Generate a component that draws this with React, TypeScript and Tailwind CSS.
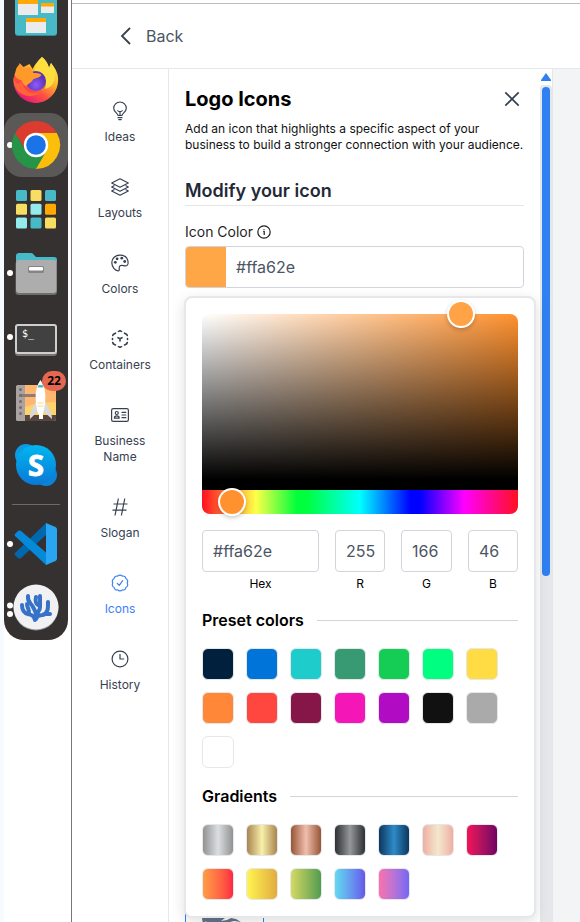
import React from "react";

type P = { children: React.ReactNode };

const Cell = ({ children }: P) => (
  <svg className="block size-16 shrink-0" viewBox="0 0 64 64">{children}</svg>
);

const Dot = ({ y = 32 }: { y?: number }) => <circle cx="6" cy={y} r="3" fill="#fff" />;

function Dock() {
  return (
    <aside className="flex w-[71px] shrink-0 border-l-4 border-[#f7fafe]">
      <div className="relative -mt-[15px] flex h-[655px] w-16 flex-col overflow-hidden rounded-b-[20px] bg-[#353130]">
        <Cell>
          <rect x="11" y="2" width="42" height="49" rx="3" fill="#348a99" />
          <rect x="11" y="2" width="42" height="48" rx="3" fill="#48b9c7" />
          <path d="M14 14h20v16H14zM37 18h13v10H37zM22 33h20v15H22z" fill="#ebebeb" />
          <path d="M14 14h20v5H14zM37 18h13v3.500H37zM22 33h20v4H22z" fill="#ffa902" />
        </Cell>
        <Cell>
          <defs>
            <linearGradient id="ff1" x1="0.85" y1="0.1" x2="0.25" y2="1">
              <stop offset="0" stopColor="#fff04f" /><stop offset="0.35" stopColor="#ffb52e" />
              <stop offset="0.65" stopColor="#ff5440" /><stop offset="1" stopColor="#e5127d" />
            </linearGradient>
            <radialGradient id="ff2" cx="0.5" cy="0.7"><stop offset="0" stopColor="#9059ff" /><stop offset="1" stopColor="#5b34b0" /></radialGradient>
          </defs>
          <path d="M38 8c4 3 6 7 7 11l2-5c5 6 8 12 7 19-1 12-11 21-22 21S9.500 45 9.500 32c0-5 2-9 5-12l1-6 4 4 6-3 3 5c3-5 5-8 9.500-12z" fill="url(#ff1)" />
          <path d="M38 8c4 3 6 7 7 11l2-5c4 6 5 12 3 18-2 5-5 7-9 8 3-8 0-15-9-18-4-1 1-9 6-14z" fill="#ffdf40" />
          <circle cx="32" cy="32" r="10" fill="url(#ff2)" />
          <path d="M10.500 26l2-7 3-4 3 5 7-2 4 6c3 0 6 0 8 2-2 3-6 3-8 4-2 4-5 4-7 7-2 0-4-3-5-6-3 0-5-2-7-5z" fill="#ff9a2a" />
          <path d="M9.800 28c2 8 5 8 8 4 1 9 9 15 19 11-7 6-17 5-23-1-3-4-5-9-4-14z" fill="#ff6438" />
        </Cell>
        <div className="h-16 w-16 rounded-[18px] bg-[#5b5957]">
          <Cell>
            <Dot />
            <path d="M32 32V20h20.800A24 24 0 0 1 32 56z" fill="#fbbe0b" />
            <path d="M32 32 42.400 38 32 56A24 24 0 0 1 11.200 20l10.400 18z" fill="#259447" />
            <path d="M11.200 20A24 24 0 0 1 52.800 20H32l-10 17z" fill="#dc3b2f" />
            <circle cx="32" cy="32" r="12.200" fill="#fff" /><circle cx="32" cy="32" r="9.800" fill="#1b73e8" />
          </Cell>
        </div>
        <Cell>
          {["#48b9c7", "#f7de62", "#48b9c7", "#f7de62", "#94ebeb", "#ffa902", "#94ebeb", "#48b9c7", "#f7de62"].map((c, i) => (
            <rect key={i} x={12 + (i % 3) * 14.500} y={13 + Math.floor(i / 3) * 13.800} width="11" height="11" rx="1.500" fill={c} />
          ))}
        </Cell>
        <Cell>
          <Dot />
          <path d="M12 15q0-3 3-3h12q2 0 3 2l2 2h18q3 0 3 3v4H12z" fill="#48b9c7" />
          <rect x="11.500" y="20" width="41.500" height="34" rx="3" fill="#706d6b" /><rect x="12" y="19" width="40.500" height="33" rx="3" fill="#adadad" />
          <rect x="24" y="25" width="16" height="7" rx="1.500" fill="#858585" /><rect x="25" y="26" width="14" height="3.500" rx="1" fill="#fff" />
        </Cell>
        <Cell>
          <Dot />
          <rect x="11" y="20" width="42" height="31" rx="3" fill="#777473" />
          <rect x="12" y="20" width="40" height="28" rx="2" fill="#414141" stroke="#cfcfcf" strokeWidth="2" />
          <text x="18" y="32" fill="#fff" fontSize="10" fontFamily="DejaVu Sans Mono, monospace">$_</text>
        </Cell>
        <div className="relative">
          <Cell>
            <rect x="12" y="16" width="40" height="36" rx="2.500" fill="#ffb76f" />
            <path d="M21 38l14-4 17-1v15H21z" fill="#fbd46b" />
            <path d="M21 46h31v3.500q0 2.500-2.500 2.500H21z" fill="#58463f" />
            <path d="M14.500 16H21v36h-6.500Q12 52 12 49.500v-31Q12 16 14.500 16z" fill="#aaa2a0" />
            <path d="M15 26.500h21" stroke="#8b7d77" strokeWidth="3" />
            {[20, 26, 32, 38, 44].map((y) => <circle key={y} cx="16.500" cy={y + 0.500} r="1.500" fill="#756d6b" />)}
            <path d="M32 32c-2 6-7 10-6 18l7-7h7l8 7c0-8-4-12-7-18z" fill="#d9d9d9" />
            <path d="M36.500 11c6 8 6 20 2.500 34h-5c-3.500-14-3.500-26 2.500-34z" fill="#fff" />
            <path d="M34.500 16h4l1 2.500h-6z" fill="#48b9c7" />
            <path d="M33.500 34h6M33.500 37h6" stroke="#f7de80" strokeWidth="1.200" />
            <path d="M35 45h4v5h-4z" fill="#fff" />
          </Cell>
          <span className="absolute top-[2px] left-[38px] flex h-5 w-6 items-center justify-center rounded-full bg-[#e66750] font-['Open_Sans',sans-serif] text-[12px] font-bold text-black">22</span>
        </div>
        <Cell>
          <defs><linearGradient id="sk" x1="0" y1="0" x2="0" y2="1"><stop stopColor="#00b7f0" /><stop offset="1" stopColor="#0a78d6" /></linearGradient></defs>
          <circle cx="22" cy="22" r="11" fill="#0a9be5" /><circle cx="42" cy="42" r="11" fill="#0c82d9" />
          <circle cx="32" cy="32" r="20" fill="url(#sk)" />
          <text x="32" y="42.500" textAnchor="middle" fill="#fff" stroke="#fff" strokeWidth="0.800" fontSize="29" fontWeight="700" fontFamily="Open Sans, sans-serif">S</text>
        </Cell>
        <div className="mx-2 mt-[7px] mb-[7px] h-px shrink-0 bg-[#6d6a69]" />
        <Cell>
          <Dot />
          <path d="M11 41 42 11v12L17 46q-1.500 1-3 0l-3-3q-1-1 0-2z" fill="#0068ae" />
          <path d="M11 24q-1-1 0-2l3-3q1.500-1 3 0l25 21.500V53z" fill="#0589d8" />
          <path d="M42 11 51.500 15q1.500.8 1.500 2.500v29q0 1.700-1.500 2.500L42 53z" fill="#29a5f3" />
        </Cell>
        <Cell>
          <Dot y={29.500} /><Dot y={38} />
          <circle cx="32" cy="32" r="22.500" fill="#8f8f91" /><circle cx="32" cy="31" r="22.500" fill="#f1f1f3" />
          <g fill="none" stroke="#3672c8" strokeLinecap="round" strokeWidth="4">
            <path d="M31 44c-1-5-4-5-7-6-4-1-6-4-6-9M25 37c0-5-2-5-2-9M31 44c2-7 0-9-2-13s-6-5-5-11M32 43c0-9 4-6 4-12v-11M34 29c-2-1-3-3-2-8M32 43c2-6 6-2 9-5s3-5 3-12M40 38h6" />
          </g>
        </Cell>
      </div>
    </aside>
  );
}

const Ico = ({ children }: P) => (
  <svg className="size-5" viewBox="0 0 20 20" fill="none" stroke="currentColor" strokeWidth="1.200" strokeLinecap="round" strokeLinejoin="round">{children}</svg>
);

const navItems: { label: string; icon: React.ReactNode; active?: boolean }[] = [
  { label: "Ideas", icon: <Ico><path d="M8 14.500c0-2.300-4.300-3.400-4.300-7.200a6.300 6.300 0 0 1 12.600 0c0 3.800-4.300 4.900-4.300 7.200zM8 16.700h4M8.800 18.600h2.400M10 14v-3.500M7.800 9.500q.2 1 1.200 1h2q1 0 1.200-1" /></Ico> },
  { label: "Layouts", icon: <Ico><path d="m10 1.800 8.300 4.200-8.300 4.200L1.700 6zM4 8.700 1.700 10l8.300 4.200 8.300-4.200L16 8.700M4 12.700 1.700 14l8.300 4.200 8.300-4.200-2.300-1.300" /></Ico> },
  { label: "Colors", icon: <Ico><path d="M10 2.200c-4.700 0-8.200 3.200-8.200 7.300 0 4.800 3.500 8.300 6.200 8.300 2.500 0 .3-3.100 1.700-4.600 1.800-2 5.300.6 7.300-.8 1.300-.9 1.300-2.600 1-4.200-.8-3.700-4-6-8-6z" /><g fill="currentColor" stroke="none"><circle cx="5.300" cy="9.300" r="1.400" /><circle cx="7.100" cy="5.800" r="1.400" /><circle cx="11.800" cy="5.200" r="1.400" /><circle cx="14.700" cy="8.500" r="1.400" /></g></Ico> },
  { label: "Containers", icon: <Ico><path strokeWidth="1.600" d="M8.500 2.400 10 1.700l1.500.7M14.500 4.200l2 1 .8 1.300M17.500 9.500v1M17.300 13.500l-.8 1.500-2 1M11.500 17.600l-1.500.7-1.500-.7M5.500 16l-2-1-.8-1.500M2.500 10.500v-1M2.700 6.500l.8-1.300 2-1M10 12v-2.300M8 8.700l2 1 2-1" /></Ico> },
  { label: "Business Name", icon: <Ico><rect x="1.600" y="3.600" width="16.800" height="12.800" rx="1.600" /><circle cx="6.800" cy="8" r="1.500" /><path d="M4.400 13.200c0-3 4.800-3 4.800 0zM12 7.300h3.800M12 10h3.800M12 12.700h3.800" /></Ico> },
  { label: "Slogan", icon: <Ico><path strokeLinecap="butt" d="M8.400 1.500 5 18.500M14.800 1.500l-3.400 17M3.500 7h14M2.500 13.200h14" /></Ico> },
  { label: "Icons", active: true, icon: <Ico><path d="M10 2.100q1.500 0 2.300 1 1.300-.3 2.400.4 1 .7 1.200 2 1.200.6 1.700 1.900.3 1.300-.3 2.600.6 1.300.3 2.600-.5 1.300-1.700 1.900-.2 1.300-1.200 2-1.100.7-2.400.4-.8 1-2.300 1t-2.300-1q-1.300.3-2.400-.4-1-.7-1.200-2-1.200-.6-1.700-1.900-.3-1.300.3-2.600-.6-1.300-.3-2.600.5-1.300 1.700-1.900.2-1.300 1.200-2 1.100-.7 2.400-.4.800-1 2.300-1zM7.300 10.500l2 1.800 3.400-4.600" /></Ico> },
  { label: "History", icon: <Ico><circle cx="10" cy="10" r="7.900" /><path strokeLinecap="butt" d="M10 5v5h4.200" /></Ico> },
];

const presets = [
  "bg-[#00203d]", "bg-[#0074d9]", "bg-[#1fcccc]", "bg-[#379a73]", "bg-[#15cd54]", "bg-[#00ff80]", "bg-[#ffdc43]",
  "bg-[#ff8737]", "bg-[#ff463f]", "bg-[#861648]", "bg-[#f516b8]", "bg-[#b10cc4]", "bg-[#111111]", "bg-[#aaaaaa]", "bg-white",
];
const gradients = [
  "from-[#8e8e8e] via-[#dcdee1] to-[#8e8e8e]", "from-[#a37f4b] via-[#f8f0aa] to-[#a37f4b]", "from-[#91502f] via-[#f0beae] to-[#91502f]",
  "from-[#292b2f] via-[#97989c] to-[#292b2f]", "from-[#0b3358] via-[#2e8bc9] to-[#0b3358]", "from-[#eeaba0] via-[#f2e8ce] to-[#eeaba0]",
  "from-[#f81155] to-[#6d0060]", "from-[#ff9f45] to-[#ff1a40]", "from-[#fff752] to-[#e0aa3e]",
  "from-[#d8dc63] to-[#4c994f]", "from-[#5fdef0] to-[#6650e9]", "from-[#ff6fab] to-[#7065f9]",
];

const Heading = ({ children }: P) => (
  <div className="flex h-6 items-center gap-[13px] text-[16px] font-semibold text-black">
    <h3>{children}</h3><div className="h-px flex-1 bg-[#d1d5db]" />
  </div>
);

const Field = ({ value, label, width }: { value: string; label: string; width: string }) => (
  <label className={`${width} flex flex-col text-center text-[12px] leading-4 text-black`}>
    <span className="flex h-[42px] items-center rounded border border-[#d1d5db] pl-[10px] text-[16px] text-[#4b5563]">{value}</span>
    <span className="mt-1">{label}</span>
  </label>
);

function ColorPopover() {
  return (
    <div className="absolute top-[227px] left-[15px] h-[622px] w-[352px] rounded-lg border-2 border-[#e5e7eb] bg-white p-4 shadow-[0_4px_14px_rgba(0,0,0,0.13)]">
      <div className="relative h-[200px] overflow-visible">
        <div className="h-[176px] rounded-t-lg bg-[linear-gradient(to_top,#000_6%,transparent),linear-gradient(to_right,#fff,#ff912e)]" />
        <div className="h-6 rounded-b-lg bg-[linear-gradient(to_right,#ff1020_0%,#ffff48_17%,#00ff3c_30%,#00ff3c_33%,#00ffff_50%,#0000ff_66%,#0000ff_69%,#ff00ff_83%,#ff1020_100%)]" />
        <i className="absolute -top-[14px] left-[245px] size-7 rounded-full border-2 border-white bg-[#ffa346] shadow-[0_2px_4px_rgba(0,0,0,0.2)]" />
        <i className="absolute top-[174px] left-4 size-7 rounded-full border-2 border-white bg-[#ff912e] shadow-[0_2px_4px_rgba(0,0,0,0.2)]" />
      </div>
      <div className="mt-4 flex gap-4">
        <Field value="#ffa62e" label="Hex" width="w-[117px]" />
        <Field value="255" label="R" width="w-[50px]" />
        <Field value="166" label="G" width="w-[51px]" />
        <Field value="46" label="B" width="w-[50px]" />
      </div>
      <div className="mt-4"><Heading>Preset colors</Heading></div>
      <div className="mt-4 flex flex-wrap gap-3">
        {presets.map((c) => <button key={c} className={`size-8 rounded-md border border-[#e5e7eb] ${c}`} />)}
      </div>
      <div className="mt-4"><Heading>Gradients</Heading></div>
      <div className="mt-4 flex flex-wrap gap-3">
        {gradients.map((c) => <button key={c} className={`size-8 rounded-md border border-[#e5e7eb] bg-linear-to-r bg-origin-border ${c}`} />)}
      </div>
    </div>
  );
}

export default function App() {
  return (
    <div className="flex h-[922px] w-[580px] overflow-hidden bg-white font-['Inter',sans-serif]">
      <Dock />
      <main className="flex min-w-0 flex-1 flex-col border-l border-[#77777b]">
        <header className="mt-[3px] flex h-[66px] shrink-0 items-center border-t border-b border-t-[#bdbdbf] border-b-[#e5e7eb] pl-12 text-[16px] text-[#4b5563]">
          <svg className="mr-[14px] h-5 w-3 text-[#374151]" viewBox="0 0 12 20" fill="none" stroke="currentColor" strokeWidth="1.800"><path d="M10 2 2 10l8 8" /></svg>
          Back
        </header>
        <div className="flex min-h-0 flex-1">
          <nav className="flex w-[97px] shrink-0 flex-col border-r border-[#e5e7eb] pt-4 text-[12px] leading-4">
            {navItems.map(({ label, icon, active }) => (
              <a key={label} className={`-mb-4 flex flex-col items-center gap-2 px-3 pt-4 pb-8 text-center ${active ? "text-[#3b82f6]" : "text-[#374151]"}`}>
                {icon}<span>{label}</span>
              </a>
            ))}
          </nav>
          <section className="relative w-[371px] shrink-0 px-4 pt-4">
            <div className="flex h-7 w-[339px] items-center justify-between">
              <h1 className="text-[20px] leading-7 font-bold text-black">Logo Icons</h1>
              <svg className="mr-1 size-4 text-[#374151]" viewBox="0 0 16 16" fill="none" stroke="currentColor" strokeWidth="1.700"><path d="m1.300 1.300 13.400 13.400M14.700 1.300 1.300 14.700" /></svg>
            </div>
            <p className="mt-2 text-[12px] leading-4 whitespace-nowrap text-[#111]">Add an icon that highlights a specific aspect of your<br />business to build a stronger connection with your audience.</p>
            <h2 className="mt-6 h-[29px] w-[339px] border-b border-[#e5e7eb] text-[18px] leading-7 font-semibold text-[#1f2937]">Modify your icon</h2>
            <div className="mt-[15px] mb-[5px] flex h-5 items-center gap-[5px] text-[14px] text-[#1f1f1f]">
              Icon Color
              <svg className="mt-[2px] -ml-px size-[14px]" viewBox="0 0 14 14" fill="none" stroke="currentColor" strokeWidth="1.200"><circle cx="7" cy="7" r="6.200" /><path d="M6.200 6.500h1V10M6.500 4.700h1" /></svg>
            </div>
            <div className="flex h-[42px] w-[339px] items-center overflow-hidden rounded border border-[#d1d5db] text-[16px] text-[#4b5563]">
              <span className="h-full w-10 bg-[#ffa647]" /><span className="pl-[10px]">#ffa62e</span>
            </div>
            <div className="mt-[620px] h-20 w-[79px] border border-[#3080f0]">
              <svg className="mt-[9px] ml-4 h-10 w-12" viewBox="0 0 48 40"><path d="M0 0h23l-4 3 6-1 4-2 5 1 5 3-7-1-4 1h-9l-8 6-2-6-3 3-2-4-3 4z" fill="#64748b" /></svg>
            </div>
            <ColorPopover />
          </section>
          <div className="flex w-[13px] shrink-0 flex-col border-r border-[#e5e7eb]">
            <div className="flex h-4 shrink-0 items-center justify-center"><svg className="h-2 w-[10px]" viewBox="0 0 10 8"><path d="M5 0 10 7v1H0V7z" fill="#2f81f2" /></svg></div>
            <div className="flex-1 rounded-t bg-[#e5e7eb] pt-[2px] pl-[2px]"><div className="h-[489px] w-2 rounded-full bg-[#2f81f2]" /></div>
          </div>
          <div className="flex-1 bg-[#f3f4f6]" />
        </div>
      </main>
    </div>
  );
}
